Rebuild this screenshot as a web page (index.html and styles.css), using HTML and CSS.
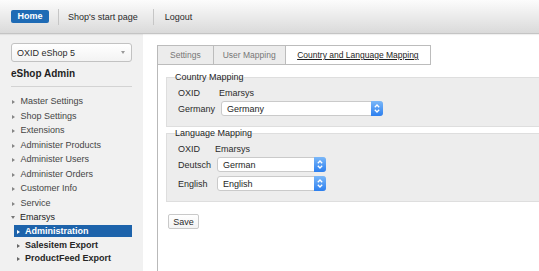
FILE: index.html
```html
<!DOCTYPE html>
<html>
<head>
<meta charset="utf-8">
<title>eShop Admin</title>
<link rel="stylesheet" href="styles.css">
</head>
<body>
<header class="topbar">
  <a class="home-btn">Home</a>
  <span class="sep"></span>
  <a class="top-link">Shop's start page</a>
  <span class="sep sep-wide"></span>
  <a class="top-link">Logout</a>
</header>
<div class="layout">
  <aside class="sidebar">
    <div class="shop-select"><span>OXID eShop 5</span><span class="caret"></span></div>
    <h1 class="admin-title">eShop Admin</h1>
    <ul class="nav">
      <li class="nav-item"><i class="tri"></i>Master Settings</li>
      <li class="nav-item"><i class="tri"></i>Shop Settings</li>
      <li class="nav-item"><i class="tri"></i>Extensions</li>
      <li class="nav-item"><i class="tri"></i>Administer Products</li>
      <li class="nav-item"><i class="tri"></i>Administer Users</li>
      <li class="nav-item"><i class="tri"></i>Administer Orders</li>
      <li class="nav-item"><i class="tri"></i>Customer Info</li>
      <li class="nav-item"><i class="tri"></i>Service</li>
      <li class="nav-item open"><i class="tri-down"></i>Emarsys</li>
      <li class="sub-item active"><span class="sub-label"><i class="tri"></i>Administration</span></li>
      <li class="sub-item"><span class="sub-label"><i class="tri"></i>Salesitem Export</span></li>
      <li class="sub-item"><span class="sub-label"><i class="tri"></i>ProductFeed Export</span></li>
    </ul>
  </aside>
  <main class="main">
    <nav class="tabs">
      <span class="tab">Settings</span>
      <span class="tab tab-narrow">User Mapping</span>
      <span class="tab active">Country and Language Mapping</span>
    </nav>
    <div class="panel">
      <fieldset class="group">
        <legend>Country Mapping</legend>
        <table class="map">
          <tr class="txt-row"><td class="lbl">OXID</td><td>Emarsys</td></tr>
          <tr class="sel-row"><td class="lbl">Germany</td><td>
            <div class="select wide"><span class="sel-text">Germany</span><span class="spin"><svg width="12" height="15" viewBox="0 0 12 15"><path d="M3.8 6.2 L6 4 L8.2 6.2 M3.8 8.8 L6 11 L8.2 8.8" fill="none" stroke="#fff" stroke-width="1.3"/></svg></span></div>
          </td></tr>
        </table>
      </fieldset>
      <fieldset class="group">
        <legend>Language Mapping</legend>
        <table class="map">
          <tr class="txt-row"><td class="lbl">OXID</td><td>Emarsys</td></tr>
          <tr class="sel-row"><td class="lbl">Deutsch</td><td>
            <div class="select"><span class="sel-text">German</span><span class="spin"><svg width="12" height="15" viewBox="0 0 12 15"><path d="M3.8 6.2 L6 4 L8.2 6.2 M3.8 8.8 L6 11 L8.2 8.8" fill="none" stroke="#fff" stroke-width="1.3"/></svg></span></div>
          </td></tr>
          <tr class="sel-row"><td class="lbl">English</td><td>
            <div class="select"><span class="sel-text">English</span><span class="spin"><svg width="12" height="15" viewBox="0 0 12 15"><path d="M3.8 6.2 L6 4 L8.2 6.2 M3.8 8.8 L6 11 L8.2 8.8" fill="none" stroke="#fff" stroke-width="1.3"/></svg></span></div>
          </td></tr>
        </table>
      </fieldset>
      <button class="save-btn" type="button">Save</button>
    </div>
  </main>
</div>
</body>
</html>
```
FILE: styles.css
```css
* { box-sizing: border-box; }
html, body { margin: 0; height: 100%; }
body {
  font-family: "Liberation Sans", Arial, sans-serif;
  font-size: 9px;
  color: #333;
  background: #fff;
  overflow: hidden;
}

/* top bar */
.topbar {
  height: 34px;
  display: flex;
  align-items: center;
  padding-left: 11px;
  background: linear-gradient(#fcfcfc, #dadada);
  border-bottom: 1px solid #c4c4c4;
  box-shadow: 0 1px 1px rgba(0,0,0,0.06);
  position: relative;
  z-index: 1;
}
.home-btn {
  height: 13px;
  line-height: 13px;
  padding: 0 6.5px;
  background: #1e6bb5;
  border-radius: 2px;
  color: #fff;
  font-weight: bold;
}
.sep {
  width: 1px;
  height: 16px;
  background: #c6c6c6;
  margin: 0 9px;
}
.sep-wide { margin: 0 11px 0 15px; }
.top-link { color: #2b2b2b; }

/* layout */
.layout {
  display: flex;
  height: calc(100% - 34px);
}
.sidebar {
  flex: none;
  width: 143px;
  background: #f1f1f1;
  padding: 9px 11px 0;
}
.shop-select {
  height: 19px;
  display: flex;
  align-items: center;
  justify-content: space-between;
  padding: 0 6px 0 5px;
  background: linear-gradient(#fff, #f3f3f3);
  border: 1px solid #c2c2c2;
  border-radius: 3px;
  color: #2b2b2b;
}
.caret {
  width: 0;
  height: 0;
  border-left: 2.5px solid transparent;
  border-right: 2.5px solid transparent;
  border-top: 3px solid #999;
}
.admin-title {
  margin: 6px 0 0;
  font-size: 10px;
  line-height: 12px;
  font-weight: bold;
  color: #1e1e1e;
  padding-bottom: 6px;
  border-bottom: 1px solid #d3d3d3;
}
.nav {
  list-style: none;
  margin: 7px 0 0;
  padding: 0;
}
.nav li {
  line-height: 14.5px;
  height: 14.5px;
  white-space: nowrap;
  color: #454545;
}
.tri {
  display: inline-block;
  width: 0;
  height: 0;
  border-top: 2.5px solid transparent;
  border-bottom: 2.5px solid transparent;
  border-left: 3.5px solid #858585;
  margin: 0 5.5px 0 1px;
  vertical-align: 0;
}
.tri-down {
  display: inline-block;
  width: 0;
  height: 0;
  border-left: 2.5px solid transparent;
  border-right: 2.5px solid transparent;
  border-top: 3px solid #777;
  margin: 0 5px 0 0;
  vertical-align: 1px;
}
.nav-item.open { color: #222; }
.nav .sub-item {
  height: 13.5px;
  line-height: 13.5px;
  padding: 0.5px 0 0 3px;
  font-weight: bold;
}
.sub-item .sub-label {
  display: block;
  height: 12px;
  line-height: 12px;
  padding-left: 3px;
  color: #262626;
}
.sub-item .tri { margin: 0 5px 0 0; border-left-color: #666; }
.sub-item.active .sub-label {
  background: #1d63ab;
  color: #fff;
}
.sub-item.active .tri { border-left-color: #fff; }

/* main */
.main {
  flex: 1;
  min-width: 0;
  margin: 11px 0 0 14px;
  border-left: 1px solid #b9b9b9;
}
.tabs {
  display: flex;
  height: 20px;
}
.tab {
  padding: 0 12px;
  line-height: 18px;
  font-size: 8.5px;
  border: 1px solid #bcbcbc;
  border-left: none;
  background: #ececec;
  color: #777;
}
.tab-narrow { padding: 0 9px; }
.tab.active {
  padding: 0 11.5px;
  background: #fff;
  color: #1e1e1e;
  text-decoration: underline;
}
.panel {
  padding: 6px 0 0 8px;
}
.group {
  margin: 0 -40px 0 0;
  padding: 0 0 8px 8px;
  border: 1px solid #dedede;
  background: #ededed;
  min-width: 0;
}
.group legend {
  padding: 0;
  line-height: 12px;
  color: #1e1e1e;
}
.map {
  border-collapse: collapse;
  margin: 4px 0 0 3px;
}
.map td { padding: 0; color: #2b2b2b; }
.map td.lbl { padding-right: 4px; }
.txt-row td { height: 12px; line-height: 12px; }
.sel-row td { height: 19px; }
.select {
  display: flex;
  align-items: center;
  width: 109px;
  height: 15px;
  margin-left: 2px;
  background: #fff;
  border: 1px solid #cacaca;
  border-radius: 3px;
  color: #1e1e1e;
}
.select.wide { width: 162px; }
.sel-text { padding-left: 5px; flex: 1; }
.spin {
  width: 12px;
  height: 15px;
  margin: -1px -1px -1px 0;
  border-radius: 0 3px 3px 0;
  background: linear-gradient(#7bb8f9, #2c7fef);
  display: flex;
}
.save-btn {
  display: block;
  margin: 12px 0 0 2px;
  width: 31px;
  height: 15px;
  padding: 0;
  font-family: inherit;
  font-size: 9px;
  color: #2b2b2b;
  background: linear-gradient(#fff, #f3f3f3);
  border: 1px solid #c9c9c9;
  border-radius: 2px;
}
```
